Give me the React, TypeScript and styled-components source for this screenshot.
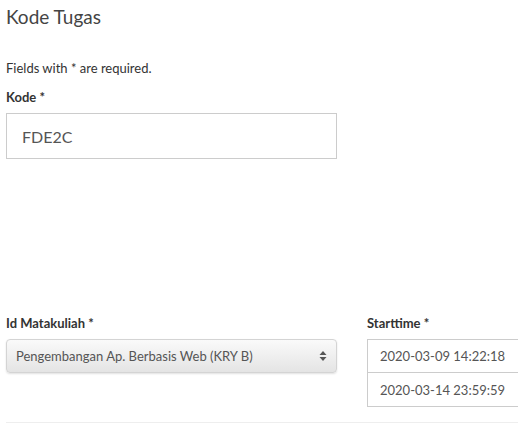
import React from "react";
import styled, { createGlobalStyle } from "styled-components";

const GlobalStyle = createGlobalStyle`
  html, body {
    margin: 0;
    padding: 0;
    background: #fff;
    overflow: hidden;
  }
  body {
    font-family: Lato, "Open Sans", Arial, sans-serif;
    color: #333;
  }
`;

const Page = styled.div`
  width: 512px;
  padding: 0 0 0 6px;
`;

const Title = styled.h3`
  margin: 0;
  padding-top: 4px;
  font-size: 19px;
  line-height: 26px;
  font-weight: 400;
  color: #444;
`;

const Note = styled.p`
  margin: 29px 0 0;
  font-size: 13px;
  line-height: 18px;
  color: #333;
`;

const Label = styled.label`
  display: block;
  font-size: 13px;
  line-height: 18px;
  font-weight: 700;
  color: #333;
  margin-bottom: 7px;
`;

const Group = styled.div<{ $top?: number }>`
  margin-top: ${({ $top }) => $top ?? 0}px;
`;

const TextBox = styled.div<{ $h?: number; $size?: number; $pad?: number }>`
  box-sizing: border-box;
  height: ${({ $h }) => $h ?? 34}px;
  display: flex;
  align-items: center;
  padding-left: ${({ $pad }) => $pad ?? 12}px;
  border: 1px solid #ccc;
  background: #fff;
  font-size: ${({ $size }) => $size ?? 13}px;
  color: #555;
  white-space: nowrap;
`;

const KodeBox = styled(TextBox)`
  width: 331px;
`;

const Row = styled.div`
  display: flex;
  gap: 30px;
  margin-top: 155px;
`;

const LeftCol = styled.div`
  width: 331px;
  flex: none;
`;

const RightCol = styled.div`
  width: 170px;
  flex: none;
`;

const Select = styled.div`
  box-sizing: border-box;
  height: 34px;
  display: flex;
  align-items: center;
  justify-content: space-between;
  padding: 0 9px 0 9px;
  border: 1px solid #d4d4d4;
  border-radius: 4px;
  background: linear-gradient(#fafafa, #e4e4e4);
  box-shadow: 0 1px 2px rgba(0, 0, 0, 0.12);
  font-size: 13px;
  color: #555;
`;

const DateStack = styled.div`
  display: flex;
  flex-direction: column;
  & > div + div {
    margin-top: -1px;
  }
`;

const Rule = styled.hr`
  border: 0;
  border-top: 1px solid #eee;
  margin: 15px 0 0;
`;

const Arrows = () => (
  <svg width="8" height="12" viewBox="0 0 8 12">
    <path d="M4 1 L7.5 5 L0.5 5 Z" fill="#555" />
    <path d="M4 11 L7.5 7 L0.5 7 Z" fill="#555" />
  </svg>
);

export default function App() {
  return (
    <Page>
      <GlobalStyle />
      <Title>Kode Tugas</Title>
      <Note>Fields with * are required.</Note>
      <Group $top={11}>
        <Label>Kode *</Label>
        <KodeBox $h={46} $size={16} $pad={15}>FDE2C</KodeBox>
      </Group>
      <Row>
        <LeftCol>
          <Label>Id Matakuliah *</Label>
          <Select>
            <span>Pengembangan Ap. Berbasis Web (KRY B)</span>
            <Arrows />
          </Select>
        </LeftCol>
        <RightCol>
          <Label>Starttime *</Label>
          <DateStack>
            <TextBox $h={34}>2020-03-09 14:22:18</TextBox>
            <TextBox $h={35}>2020-03-14 23:59:59</TextBox>
          </DateStack>
        </RightCol>
      </Row>
      <Rule />
    </Page>
  );
}
